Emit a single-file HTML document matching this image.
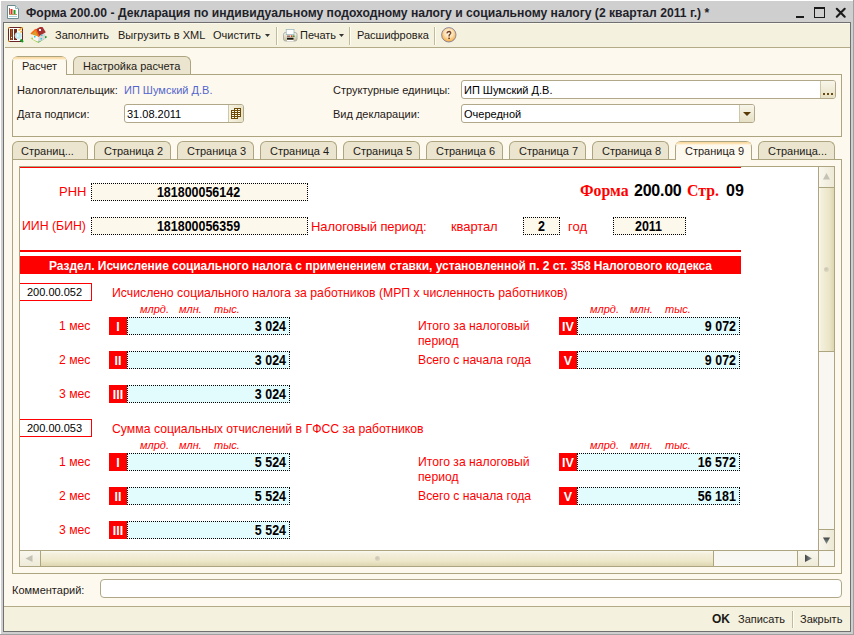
<!DOCTYPE html>
<html><head><meta charset="utf-8">
<style>
*{margin:0;padding:0;box-sizing:border-box}
html,body{width:854px;height:635px;overflow:hidden}
body{position:relative;background:#cfcfcf;font-family:"Liberation Sans",sans-serif;font-size:11px;color:#1e1a16}
.a{position:absolute}
.t{position:absolute;white-space:nowrap;line-height:1}
.tab{position:absolute;border:1px solid #ada57f;border-bottom:none;border-radius:6px 6px 0 0;background:#ebe5cf}
.sep{position:absolute;width:2px;background:#c2ba98;border-right:1px solid #fffef6}
.dot{position:absolute;border:1px dotted #000}
.rb{position:absolute;background:#f00;width:18px;height:18px;color:#fff;font-weight:bold;font-size:12.5px;line-height:20px;text-align:center}
.fld{position:absolute;background:#e2fcfd;border:1px dotted #000;height:18px;width:163px}
.val{position:absolute;right:3px;top:1px;font-weight:bold;font-size:14px;line-height:1;color:#000;transform:scaleX(0.89);transform-origin:100% 0}
.red{color:#f00}
.it{font-style:italic;font-size:10px}
</style></head><body>
<!-- outer white edge -->
<div class="a" style="left:0;top:0;width:854px;height:1px;background:#fff"></div>
<div class="a" style="left:0;top:0;width:1px;height:635px;background:#fff"></div>
<div class="a" style="left:853px;top:0;width:1px;height:635px;background:#a0a0a0"></div>
<div class="a" style="left:0;top:634px;width:854px;height:1px;background:#a0a0a0"></div>

<!-- title icon -->
<svg class="a" style="left:7px;top:5px" width="12" height="14" viewBox="0 0 12 14">
<path d="M0.5 0.5H8.5L11.5 3.5V13.5H0.5Z" fill="#fff" stroke="#6b8b8e"/>
<path d="M8.5 0.5V3.5H11.5" fill="#dfeef2" stroke="#8fb3bb"/>
<rect x="2" y="3" width="1" height="6" fill="#7a6a60"/>
<rect x="3.5" y="4" width="2" height="5" fill="#f0281e"/>
<rect x="6.5" y="5" width="2" height="4" fill="#1aa51a"/>
<rect x="2" y="9" width="8" height="1" fill="#b89a60"/>
<rect x="2" y="11" width="8" height="1" fill="#a8d0d8"/>
</svg>
<div class="t" style="left:26px;top:7px;font-size:12.15px;font-weight:bold;color:#1f1f2a">Форма 200.00 - Декларация по индивидуальному подоходному налогу и социальному налогу (2 квартал 2011 г.) *</div>
<!-- window buttons -->
<div class="a" style="left:796px;top:16px;width:8px;height:2px;background:#1a1a1a"></div>
<div class="a" style="left:814px;top:7px;width:11px;height:11px;border:1px solid #1a1a1a;border-top-width:2px"></div>
<svg class="a" style="left:835px;top:7px" width="12" height="12" viewBox="0 0 12 12"><path d="M1.8 1.8L9.7 9.7M9.7 1.8L1.8 9.7" stroke="#1a1a1a" stroke-width="2.1" stroke-linecap="round"/></svg>

<!-- window frame -->
<div class="a" style="left:3px;top:22px;width:848px;height:610px;border:1px solid #707070;background:#fef9ef"></div>
<!-- toolbar -->
<div class="a" style="left:4px;top:23px;width:846px;height:24px;background:#f4f1de"></div>
<div class="a" style="left:4px;top:47px;width:846px;height:1px;background:#b3aa88"></div>
<div class="a" style="left:4px;top:23px;width:846px;height:1px;background:#fbf9ea"></div>
<div class="a" style="left:4px;top:23px;width:1px;height:607px;background:#fbf9ea"></div>

<!-- toolbar icon 1 -->
<svg class="a" style="left:8px;top:27px" width="16" height="16" viewBox="0 0 16 16">
<rect x="0.5" y="0.5" width="14" height="14" fill="#fff" stroke="#6a2626"/>
<rect x="0" y="0" width="1.5" height="1.5" fill="#e8b040"/><rect x="13.5" y="0" width="1.5" height="1.5" fill="#e8b040"/><rect x="0" y="13.5" width="1.5" height="1.5" fill="#e8b040"/>
<rect x="2" y="2" width="3" height="11" fill="#7a3a1a"/><rect x="3" y="2" width="1" height="11" fill="#a8602a"/>
<rect x="6" y="2" width="3" height="11" fill="#6e2a1e"/>
<rect x="3" y="10" width="1" height="1" fill="#fff"/>
<circle cx="10.3" cy="8.7" r="3.3" fill="#bfeef0" stroke="#d8e8ea" stroke-width="0.8"/>
<rect x="9" y="7" width="1.5" height="3" fill="#fff" opacity="0.7"/>
<path d="M10.5 3.5L13.5 1.5M12.5 5.5L14 4" stroke="#f0b030" stroke-width="1.6"/>
<path d="M12.5 12.5L15 15" stroke="#14a020" stroke-width="2.2"/>
</svg>
<!-- house icon -->
<svg class="a" style="left:28px;top:24px" width="22" height="22" viewBox="0 0 22 22">
<path d="M3.5 14L10 18" stroke="#a8d040" stroke-width="1.6"/>
<path d="M10 18L18.5 12.5" stroke="#1aa01a" stroke-width="1.8"/>
<path d="M5 10L10.5 12.5V18L5 15.5Z" fill="#f6f6fa"/>
<path d="M10.5 12.5L17 9.5V15L10.5 18Z" fill="#d6d6dc"/>
<path d="M3.5 9.5L7.5 5.5L10.5 12.5L5 11Z" fill="#d4a030"/>
<path d="M7.5 5.5L12 3H14.5L17.8 8.3L10.5 12.5Z" fill="#a83030"/>
<rect x="11" y="5" width="2" height="2" fill="#fff"/>
<path d="M3 10L7.8 5.2M7.6 5.4L10.8 12.8" stroke="#ff6a10" stroke-width="1.5"/>
<rect x="6" y="12" width="1.5" height="1.5" fill="#30c8d8"/>
<rect x="13" y="10.5" width="1.5" height="1.5" fill="#30c8d8"/>
<rect x="12.5" y="14" width="1.5" height="1.5" fill="#30c8d8"/>
</svg>
<div class="t" style="left:55px;top:30px">Заполнить</div>
<div class="t" style="left:118px;top:30px">Выгрузить в XML</div>
<div class="t" style="left:213px;top:30px">Очистить</div>
<svg class="a" style="left:265px;top:34px" width="6" height="4"><path d="M0 0h5l-2.5 3z" fill="#333"/></svg>
<div class="sep" style="left:276px;top:27px;height:18px"></div>
<!-- printer -->
<svg class="a" style="left:283px;top:29px" width="15" height="13" viewBox="0 0 15 13">
<defs><linearGradient id="pg" x1="0" y1="0" x2="0" y2="1"><stop offset="0" stop-color="#fafaf4"/><stop offset="1" stop-color="#c4bc98"/></linearGradient></defs>
<rect x="0.5" y="3.5" width="13.5" height="8.5" rx="2" fill="url(#pg)" stroke="#a9a9a2" stroke-width="0.9"/>
<rect x="3.2" y="0.4" width="7.8" height="5.2" fill="#fff" stroke="#9ab8bc" stroke-width="0.8"/>
<rect x="4" y="6.6" width="3" height="1.2" fill="#8a5050"/>
<circle cx="8.7" cy="7.2" r="0.9" fill="#e83020"/><circle cx="10.8" cy="7.2" r="0.9" fill="#20a030"/>
<rect x="4" y="8.8" width="6.5" height="1.8" fill="#141414"/>
<rect x="4" y="11" width="6.5" height="1.2" fill="#fff"/>
</svg>
<div class="t" style="left:300px;top:30px">Печать</div>
<svg class="a" style="left:339px;top:34px" width="6" height="4"><path d="M0 0h5l-2.5 3z" fill="#333"/></svg>
<div class="sep" style="left:349px;top:27px;height:18px"></div>
<div class="t" style="left:357px;top:30px">Расшифровка</div>
<div class="sep" style="left:434px;top:27px;height:18px"></div>
<svg class="a" style="left:441px;top:27px" width="16" height="16" viewBox="0 0 16 16">
<defs><radialGradient id="hg" cx="0.5" cy="0.4" r="0.6"><stop offset="0" stop-color="#fffaf2"/><stop offset="0.5" stop-color="#fde0b0"/><stop offset="1" stop-color="#f2a63a"/></radialGradient></defs>
<circle cx="7.8" cy="7.8" r="7.2" fill="url(#hg)" stroke="#76759a" stroke-width="0.8"/>
<path d="M5.9 6.4C6 5.1 7 4.5 8.1 4.5C9.3 4.6 10 5.4 9.7 6.4C9.4 7.3 8.3 7.5 8.1 8.6V9.4" fill="none" stroke="#6e3a1c" stroke-width="1.3"/>
<rect x="7.3" y="10.6" width="1.6" height="1.5" fill="#6e3a1c"/>
</svg>

<!-- top tabs -->
<div class="tab" style="left:73px;top:56px;width:118px;height:18px"></div>
<div class="a" style="left:12px;top:74px;width:830px;height:63px;border:1px solid #ada57f"></div>
<div class="tab" style="left:12px;top:56px;width:55px;height:19px;background:#fef9ef"><div class="a" style="left:0;right:0;top:0;height:3px;border-radius:5px 5px 0 0;background:linear-gradient(#f9d69c,#fde4b6 55%,#fef9ef)"></div></div>
<div class="t" style="left:22px;top:61px">Расчет</div>
<div class="t" style="left:83px;top:61px">Настройка расчета</div>

<!-- group contents -->
<div class="t" style="left:17px;top:85px">Налогоплательщик:</div>
<div class="t" style="left:124px;top:85px;color:#5466cc">ИП Шумский Д.В.</div>
<div class="t" style="left:17px;top:109px">Дата подписи:</div>
<div class="a" style="left:124px;top:104px;width:120px;height:19px;border:1px solid #b0a888;border-radius:3px;background:#fff"></div>
<div class="t" style="left:127px;top:109px;color:#000">31.08.2011</div>
<div class="a" style="left:228px;top:105px;width:15px;height:17px;background:linear-gradient(90deg,#f6f3e4,#e9e3c8);border-left:1px solid #cfc8a8;border-radius:0 2px 2px 0"></div>
<svg class="a" style="left:231px;top:108px" width="10" height="11" viewBox="0 0 10 11"><rect x="3" y="0" width="7" height="3" fill="#6e4a08"/><rect x="0" y="2" width="10" height="7" fill="#6e4a08"/><rect x="0" y="8" width="7" height="3" fill="#6e4a08"/><rect x="4" y="1" width="2" height="1" fill="#fffbe8"/><rect x="7" y="1" width="2" height="1" fill="#fffbe8"/><rect x="1" y="3" width="2" height="1" fill="#fffbe8"/><rect x="4" y="3" width="2" height="1" fill="#fffbe8"/><rect x="7" y="3" width="2" height="1" fill="#fffbe8"/><rect x="1" y="5" width="2" height="1" fill="#fffbe8"/><rect x="4" y="5" width="2" height="1" fill="#fffbe8"/><rect x="7" y="5" width="2" height="1" fill="#fffbe8"/><rect x="1" y="7" width="2" height="1" fill="#fffbe8"/><rect x="4" y="7" width="2" height="1" fill="#fffbe8"/><rect x="7" y="7" width="2" height="1" fill="#fffbe8"/><rect x="1" y="9" width="2" height="1" fill="#fffbe8"/><rect x="4" y="9" width="2" height="1" fill="#fffbe8"/></svg>

<div class="t" style="left:333px;top:85px">Структурные единицы:</div>
<div class="a" style="left:461px;top:80px;width:375px;height:19px;border:1px solid #b0a888;border-radius:3px;background:#fff"></div>
<div class="t" style="left:464px;top:85px;color:#000">ИП Шумский Д.В.</div>
<div class="a" style="left:820px;top:81px;width:15px;height:17px;background:linear-gradient(#f8f6ea,#e6e0c4);border-left:1px solid #cfc8a8;border-radius:0 2px 2px 0"></div>
<div class="a" style="left:823px;top:93px;width:2px;height:2px;background:#6a4a10"></div><div class="a" style="left:827px;top:93px;width:2px;height:2px;background:#6a4a10"></div><div class="a" style="left:831px;top:93px;width:2px;height:2px;background:#6a4a10"></div>
<div class="t" style="left:333px;top:109px">Вид декларации:</div>
<div class="a" style="left:461px;top:104px;width:294px;height:19px;border:1px solid #b0a888;border-radius:3px;background:#fff"></div>
<div class="t" style="left:464px;top:109px;color:#000">Очередной</div>
<div class="a" style="left:739px;top:105px;width:15px;height:17px;background:linear-gradient(#f8f6ea,#e6e0c4);border-left:1px solid #cfc8a8;border-radius:0 2px 2px 0"></div>
<svg class="a" style="left:743px;top:112px" width="9" height="5"><path d="M0 0h8l-4 4z" fill="#5a3a08"/></svg>

<!-- page tabs -->
<div class="tab" style="left:12px;top:141px;width:76px;height:18px"></div>
<div class="tab" style="left:94px;top:141px;width:77px;height:18px"></div>
<div class="tab" style="left:177px;top:141px;width:77px;height:18px"></div>
<div class="tab" style="left:260px;top:141px;width:77px;height:18px"></div>
<div class="tab" style="left:343px;top:141px;width:77px;height:18px"></div>
<div class="tab" style="left:426px;top:141px;width:77px;height:18px"></div>
<div class="tab" style="left:509px;top:141px;width:77px;height:18px"></div>
<div class="tab" style="left:592px;top:141px;width:77px;height:18px"></div>
<div class="tab" style="left:758px;top:141px;width:77px;height:18px"></div>
<div class="a" style="left:12px;top:159px;width:830px;height:415px;border:1px solid #ada57f;background:#fef9ef"></div>
<div class="tab" style="left:675px;top:141px;width:77px;height:19px;background:#fef9ef"><div class="a" style="left:0;right:0;top:0;height:3px;border-radius:5px 5px 0 0;background:linear-gradient(#f9d69c,#fde4b6 55%,#fef9ef)"></div></div>
<div class="t" style="left:21px;top:146px">Страниц...</div>
<div class="t" style="left:104px;top:146px">Страница 2</div>
<div class="t" style="left:187px;top:146px">Страница 3</div>
<div class="t" style="left:270px;top:146px">Страница 4</div>
<div class="t" style="left:353px;top:146px">Страница 5</div>
<div class="t" style="left:436px;top:146px">Страница 6</div>
<div class="t" style="left:519px;top:146px">Страница 7</div>
<div class="t" style="left:602px;top:146px">Страница 8</div>
<div class="t" style="left:685px;top:146px">Страница 9</div>
<div class="t" style="left:768px;top:146px">Страница...</div>

<!-- scroll area -->
<div class="a" style="left:19px;top:166px;width:816px;height:401px;border:1px solid #ada57f;background:#fff;overflow:hidden" id="sa">
</div>
<!-- content -->
<div class="a" style="left:20px;top:167px;width:721px;height:1px;background:#f00"></div>
<div class="t red" style="left:59px;top:185px;font-size:13px">РНН</div>
<div class="dot" style="left:91px;top:183px;width:217px;height:18px;background:#fdf8ec"></div>
<div class="t" style="left:90px;top:185px;width:217px;text-align:center;font-weight:bold;font-size:14px;color:#000;transform:scaleX(0.89)">181800056142</div>
<div class="t red" style="left:580px;top:183px;font-family:'Liberation Serif',serif;font-weight:bold;font-size:15.8px">Форма</div>
<div class="t" style="left:634px;top:183px;font-weight:bold;font-size:16px;letter-spacing:-0.25px;color:#000">200.00</div>
<div class="t red" style="left:687px;top:183px;font-family:'Liberation Serif',serif;font-weight:bold;font-size:15.8px">Стр.</div>
<div class="t" style="left:726px;top:183px;font-weight:bold;font-size:16px;color:#000">09</div>
<div class="t red" style="left:22px;top:220px;font-size:12.3px">ИИН (БИН)</div>
<div class="dot" style="left:91px;top:217px;width:217px;height:18px;background:#fdf8ec"></div>
<div class="t" style="left:90px;top:219px;width:217px;text-align:center;font-weight:bold;font-size:14px;color:#000;transform:scaleX(0.89)">181800056359</div>
<div class="t red" style="left:311px;top:220px;font-size:13px;letter-spacing:-0.1px">Налоговый период:</div>
<div class="t red" style="left:451px;top:220px;font-size:13px;letter-spacing:-0.1px">квартал</div>
<div class="dot" style="left:523px;top:217px;width:37px;height:18px;background:#fdf8ec"></div>
<div class="t" style="left:523px;top:219px;width:37px;text-align:center;font-weight:bold;font-size:14px;color:#000;transform:scaleX(0.89)">2</div>
<div class="t red" style="left:568px;top:220px;font-size:13px">год</div>
<div class="dot" style="left:613px;top:217px;width:73px;height:18px;background:#fdf8ec"></div>
<div class="t" style="left:612px;top:219px;width:73px;text-align:center;font-weight:bold;font-size:14px;color:#000;transform:scaleX(0.89)">2011</div>
<div class="a" style="left:20px;top:250px;width:721px;height:2px;background:#f00"></div>
<div class="a" style="left:20px;top:256px;width:721px;height:18px;background:#f00;color:#fff;font-weight:bold;font-size:12px;letter-spacing:-0.05px;line-height:20px;text-align:center;white-space:nowrap">Раздел. Исчисление социального налога с применением ставки, установленной п. 2 ст. 358 Налогового кодекса</div>
<div class="a" style="left:20px;top:283px;width:72px;height:18px;border:1px solid #f00;border-left:none;background:#fff;color:#000;font-size:11px;line-height:16px;text-align:center;padding-right:2px">200.00.052</div>
<div class="t red" style="left:112px;top:287px;font-size:12.25px">Исчислено социального налога за работников (МРП х численность работников)</div>
<div class="t red it" style="left:140px;top:304px;font-size:11px">млрд.</div>
<div class="t red it" style="left:179px;top:304px;font-size:11px">млн.</div>
<div class="t red it" style="left:214px;top:304px;font-size:11px">тыс.</div>
<div class="t red it" style="left:590px;top:304px;font-size:11px">млрд.</div>
<div class="t red it" style="left:630px;top:304px;font-size:11px">млн.</div>
<div class="t red it" style="left:665px;top:304px;font-size:11px">тыс.</div>
<div class="t red" style="left:59px;top:320px;font-size:12.2px">1 мес</div>
<div class="rb" style="left:109px;top:317px">I</div>
<div class="fld" style="left:127px;top:317px"><div class="val">3 024</div></div>
<div class="t red" style="left:59px;top:354px;font-size:12.2px">2 мес</div>
<div class="rb" style="left:109px;top:351px">II</div>
<div class="fld" style="left:127px;top:351px"><div class="val">3 024</div></div>
<div class="t red" style="left:59px;top:388px;font-size:12.2px">3 мес</div>
<div class="rb" style="left:109px;top:385px">III</div>
<div class="fld" style="left:127px;top:385px"><div class="val">3 024</div></div>
<div class="t red" style="left:418px;top:320px;font-size:12.2px">Итого за налоговый</div>
<div class="t red" style="left:418px;top:335px;font-size:12.2px">период</div>
<div class="t red" style="left:418px;top:354px;font-size:12.2px">Всего с начала года</div>
<div class="rb" style="left:559px;top:317px">IV</div>
<div class="fld" style="left:577px;top:317px"><div class="val">9 072</div></div>
<div class="rb" style="left:559px;top:351px">V</div>
<div class="fld" style="left:577px;top:351px"><div class="val">9 072</div></div>
<div class="a" style="left:20px;top:419px;width:72px;height:18px;border:1px solid #f00;border-left:none;background:#fff;color:#000;font-size:11px;line-height:16px;text-align:center;padding-right:2px">200.00.053</div>
<div class="t red" style="left:112px;top:423px;font-size:12.25px">Сумма социальных отчислений в ГФСС за работников</div>
<div class="t red it" style="left:140px;top:440px;font-size:11px">млрд.</div>
<div class="t red it" style="left:179px;top:440px;font-size:11px">млн.</div>
<div class="t red it" style="left:214px;top:440px;font-size:11px">тыс.</div>
<div class="t red it" style="left:590px;top:440px;font-size:11px">млрд.</div>
<div class="t red it" style="left:630px;top:440px;font-size:11px">млн.</div>
<div class="t red it" style="left:665px;top:440px;font-size:11px">тыс.</div>
<div class="t red" style="left:59px;top:456px;font-size:12.2px">1 мес</div>
<div class="rb" style="left:109px;top:453px">I</div>
<div class="fld" style="left:127px;top:453px"><div class="val">5 524</div></div>
<div class="t red" style="left:59px;top:490px;font-size:12.2px">2 мес</div>
<div class="rb" style="left:109px;top:487px">II</div>
<div class="fld" style="left:127px;top:487px"><div class="val">5 524</div></div>
<div class="t red" style="left:59px;top:524px;font-size:12.2px">3 мес</div>
<div class="rb" style="left:109px;top:521px">III</div>
<div class="fld" style="left:127px;top:521px"><div class="val">5 524</div></div>
<div class="t red" style="left:418px;top:456px;font-size:12.2px">Итого за налоговый</div>
<div class="t red" style="left:418px;top:471px;font-size:12.2px">период</div>
<div class="t red" style="left:418px;top:490px;font-size:12.2px">Всего с начала года</div>
<div class="rb" style="left:559px;top:453px">IV</div>
<div class="fld" style="left:577px;top:453px"><div class="val">16 572</div></div>
<div class="rb" style="left:559px;top:487px">V</div>
<div class="fld" style="left:577px;top:487px"><div class="val">56 181</div></div>
<!-- /content -->
<!-- scrollbars -->
<div class="a" style="left:818px;top:167px;width:1px;height:383px;background:#ada57f"></div>
<div class="a" style="left:819px;top:167px;width:15px;height:20px;background:linear-gradient(90deg,#f9f7ee,#ede9d6)"></div>
<div class="a" style="left:819px;top:187px;width:15px;height:1px;background:#ada57f"></div>
<svg class="a" style="left:822px;top:173px" width="9" height="7"><path d="M4.5 0L8 6.5H1z" fill="#c4c2b4"/></svg>
<div class="a" style="left:819px;top:188px;width:15px;height:163px;background:linear-gradient(90deg,#fbf9ef 0,#f3efdb 15%,#ebe5c8 70%,#ddd6b0 100%)"></div>
<div class="a" style="left:819px;top:351px;width:15px;height:1px;background:#ada57f"></div>
<div class="a" style="left:824px;top:267px;width:5px;height:5px;border-radius:50%;background:radial-gradient(circle at 40% 40%,#c9c5b0,#e3dfca)"></div>
<div class="a" style="left:819px;top:352px;width:15px;height:177px;background:#f8f7f1"></div>
<div class="a" style="left:819px;top:529px;width:15px;height:1px;background:#ada57f"></div>
<div class="a" style="left:819px;top:530px;width:15px;height:20px;background:linear-gradient(90deg,#f9f7ee,#ede9d6)"></div>
<svg class="a" style="left:822px;top:537px" width="9" height="7"><defs><linearGradient id="dg" x1="0" y1="0" x2="0" y2="1"><stop offset="0" stop-color="#444"/><stop offset="1" stop-color="#8a9a98"/></linearGradient></defs><path d="M1 0.5H8L4.5 7z" fill="url(#dg)"/></svg>
<div class="a" style="left:20px;top:550px;width:814px;height:1px;background:#ada57f"></div>
<div class="a" style="left:20px;top:551px;width:20px;height:15px;background:linear-gradient(#f9f7ee,#efebd8)"></div>
<div class="a" style="left:40px;top:551px;width:1px;height:15px;background:#ada57f"></div>
<svg class="a" style="left:25px;top:554px" width="8" height="9"><path d="M0.5 4.5L7.5 1V8z" fill="#c4c2b4"/></svg>
<div class="a" style="left:41px;top:551px;width:672px;height:15px;background:linear-gradient(#fbf9ef 0,#f3efdb 20%,#eee8cb 65%,#ddd6b0 100%)"></div>
<div class="a" style="left:713px;top:551px;width:1px;height:15px;background:#ada57f"></div>
<div class="a" style="left:375px;top:556px;width:5px;height:5px;border-radius:50%;background:radial-gradient(circle at 40% 40%,#c9c5b0,#e3dfca)"></div>
<div class="a" style="left:714px;top:551px;width:83px;height:15px;background:#f8f7f1"></div>
<div class="a" style="left:797px;top:551px;width:1px;height:15px;background:#ada57f"></div>
<div class="a" style="left:798px;top:551px;width:20px;height:15px;background:linear-gradient(#f9f7ee,#efebd8)"></div>
<svg class="a" style="left:804px;top:554px" width="9" height="9"><defs><linearGradient id="rg" x1="0" y1="0" x2="1" y2="0"><stop offset="0" stop-color="#444"/><stop offset="1" stop-color="#8a9a98"/></linearGradient></defs><path d="M1 0.5L8 4.5L1 8z" fill="url(#rg)"/></svg>
<div class="a" style="left:818px;top:551px;width:1px;height:15px;background:#ada57f"></div>
<div class="a" style="left:819px;top:551px;width:15px;height:15px;background:#f8f7f1"></div>
<!-- /scrollbars -->


<!-- comment -->
<div class="t" style="left:12px;top:585px">Комментарий:</div>
<div class="a" style="left:100px;top:579px;width:742px;height:19px;border:1px solid #b0a888;border-radius:4px;background:#fff"></div>

<!-- bottom bar -->
<div class="a" style="left:4px;top:606px;width:846px;height:1px;background:#b3aa88"></div>
<div class="a" style="left:4px;top:607px;width:846px;height:24px;background:#f4f1de"></div>
<div class="t" style="left:712px;top:613px;font-weight:bold;font-size:12px">OK</div>
<div class="t" style="left:738px;top:614px">Записать</div>
<div class="sep" style="left:792px;top:611px;height:17px"></div>
<div class="t" style="left:800px;top:614px">Закрыть</div>
</body></html>
